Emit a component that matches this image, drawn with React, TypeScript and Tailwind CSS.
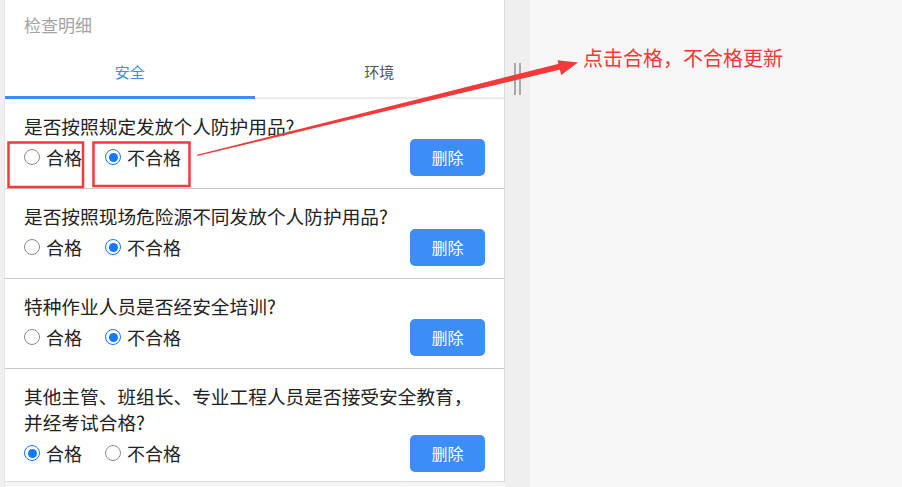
import React, { useState } from "react";

type Item = { id: number; lines: string[]; value: "ok" | "bad" };

const initial: Item[] = [
  { id: 1, lines: ["是否按照规定发放个人防护用品?"], value: "bad" },
  { id: 2, lines: ["是否按照现场危险源不同发放个人防护用品?"], value: "bad" },
  { id: 3, lines: ["特种作业人员是否经安全培训?"], value: "bad" },
  { id: 4, lines: ["其他主管、班组长、专业工程人员是否接受安全教育，", "并经考试合格?"], value: "ok" },
];

const FONT = { fontFamily: '"Noto Sans CJK SC", "Noto Sans", sans-serif' };

function Radio({ checked, label, onClick }: { checked: boolean; label: string; onClick: () => void }) {
  return (
    <button type="button" onClick={onClick} className="flex items-center gap-[6px] text-[18px] leading-none text-[#222]">
      <span
        className={
          checked
            ? "flex h-[16px] w-[16px] items-center justify-center rounded-full border border-[#1677ff] bg-white"
            : "flex h-[16px] w-[16px] items-center justify-center rounded-full border border-[#8c8c8c] bg-white"
        }
      >
        {checked && <span className="h-[9px] w-[9px] rounded-full bg-[#1677ff]" />}
      </span>
      <span>{label}</span>
    </button>
  );
}

export default function App() {
  const [items, setItems] = useState<Item[]>(initial);
  const [tab, setTab] = useState(0);

  const setValue = (id: number, value: "ok" | "bad") =>
    setItems((xs) => xs.map((x) => (x.id === id ? { ...x, value } : x)));

  return (
    <div className="relative flex h-[487px] w-[902px] items-start overflow-hidden bg-[#f7f7f7]" style={FONT}>
      {/* left edge */}
      <div className="h-full w-[5px] shrink-0 border-r border-[#e6e6e6] bg-[#f0f0f0]" />

      {/* detail panel */}
      <div className="flex h-[482px] w-[500px] shrink-0 flex-col overflow-hidden border-r border-b border-[#dcdcdc] bg-white">
        <div className="flex h-[50px] shrink-0 items-center px-[19px] text-[17px] text-[#a3a3a3]">检查明细</div>
        <div className="flex h-[49px] shrink-0">
          {["安全", "环境"].map((t, i) => (
            <button
              key={t}
              type="button"
              onClick={() => setTab(i)}
              className={
                tab === i
                  ? "flex flex-1 items-center justify-center border-b-[3px] border-[#3a8ef6] pb-[2px] text-[15px] text-[#3a8ef6]"
                  : "flex flex-1 items-center justify-center border-b-2 border-[#ebebeb] pb-[3px] text-[15px] text-[#555]"
              }
            >
              {t}
            </button>
          ))}
        </div>

        <div className="min-h-0 flex-1 overflow-hidden">
          {items.map((it) => (
            <div key={it.id} className="border-b border-[#c9c9c9] px-[19px] pt-[14px] pb-[13px]">
              {it.lines.map((l) => (
                <div key={l} className="text-[18.7px] leading-[26px] text-[#222]">
                  {l}
                </div>
              ))}
              <div className="flex h-[36px] items-center justify-between">
                <div className="flex items-center gap-[23px]">
                  <Radio checked={it.value === "ok"} label="合格" onClick={() => setValue(it.id, "ok")} />
                  <Radio checked={it.value === "bad"} label="不合格" onClick={() => setValue(it.id, "bad")} />
                </div>
                <button
                  type="button"
                  onClick={() => setItems((xs) => xs.filter((x) => x.id !== it.id))}
                  className="h-[37px] w-[75px] rounded-[5px] bg-[#3a8ef6] text-[16px] text-white"
                >
                  删除
                </button>
              </div>
            </div>
          ))}
        </div>
      </div>

      {/* splitter */}
      <div className="h-full w-[25px] shrink-0 bg-[#efefef] pt-[63px] pl-[9px]">
        <div className="flex h-[32px] gap-[3px]">
          <div className="w-[2px] bg-[#a9a9a9]" />
          <div className="w-[2px] bg-[#a9a9a9]" />
        </div>
      </div>

      {/* right area with note */}
      <div className="flex-1 pt-[45px] pl-[53px]">
        <div className="text-[20px] leading-[26px] text-[#ff3434]">点击合格，不合格更新</div>
      </div>

      {/* annotation overlay */}
      <svg className="pointer-events-none absolute inset-0" width={902} height={487} viewBox="0 0 902 487">
        <rect x={8.5} y={142.5} width={74.5} height={44.5} fill="none" stroke="#f23a3a" strokeWidth={2.5} />
        <rect x={93.5} y={142.5} width={96} height={43.5} fill="none" stroke="#f23a3a" strokeWidth={2.5} />
        <polygon points="197,154.7 197.3,156 560.4,69.6 559.0,63.8" fill="#f23a3a" />
        <polygon points="578,62.5 557.6,60.3 561.2,75.1" fill="#f23a3a" />
      </svg>
    </div>
  );
}
